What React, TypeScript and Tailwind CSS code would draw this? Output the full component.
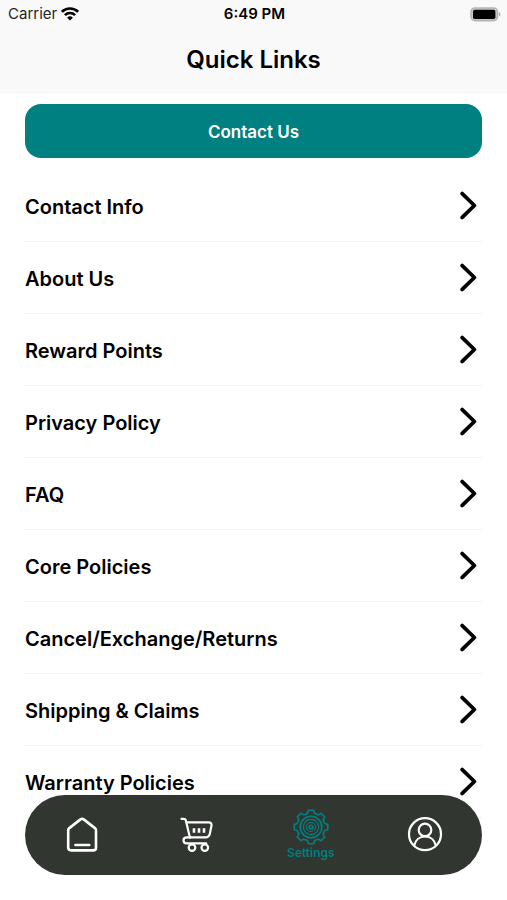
import { ReactNode, useState } from "react";

interface Tab {
  id: string;
  label: string;
  icon: ReactNode;
}

const links = [
  "Contact Info",
  "About Us",
  "Reward Points",
  "Privacy Policy",
  "FAQ",
  "Core Policies",
  "Cancel/Exchange/Returns",
  "Shipping & Claims",
  "Warranty Policies",
];

function WifiIcon() {
  return (
    <svg width="18" height="14" viewBox="0 0 18 14" fill="none" stroke="currentColor" strokeWidth="2.6" aria-hidden="true">
      <path d="M.9 4.8a11.6 11.6 0 0 1 16.2 0" />
      <path d="M3.9 8.1a7.3 7.3 0 0 1 10.2 0" />
      <path d="M9 13.6 6.1 10.7a4.1 4.1 0 0 1 5.8 0Z" fill="currentColor" stroke="none" />
    </svg>
  );
}

function BatteryIcon() {
  return (
    <svg width="31" height="15" viewBox="0 0 31 15" aria-hidden="true">
      <rect x="1" y="1" width="26.5" height="12.6" rx="4" fill="#c9c9c9" stroke="#b5b5b5" strokeWidth="1.6" />
      <rect x="3" y="2.8" width="22.4" height="9.2" rx="1.8" fill="#000" />
      <path d="M28.9 5.2c1 .4 1.6 1.2 1.6 2.1s-.6 1.7-1.6 2.1Z" fill="#adadad" />
    </svg>
  );
}

function ChevronIcon() {
  return (
    <svg width="18" height="30" viewBox="0 0 18 30" fill="none" stroke="#000" strokeWidth="3.8" strokeLinecap="round" strokeLinejoin="round" aria-hidden="true">
      <path d="M2.2 2.6 14.4 14.5 2.2 26.4" />
    </svg>
  );
}

function HomeIcon() {
  return (
    <svg width="36" height="36" viewBox="0 0 36 36" fill="none" stroke="currentColor" strokeWidth="2.6" strokeLinecap="round" strokeLinejoin="round" aria-hidden="true">
      <path d="M4.2 13.400c0-1 .3-1.600 1.100-2.300L16.500 2.400c1.100-.9 2.100-.9 3.200 0l11.200 8.700c.8.700 1.100 1.300 1.100 2.300v17c0 2-.9 3-2.900 3h-22c-2 0-2.900-1-2.900-3Z" />
      <path d="M11.400 28h13.800" />
    </svg>
  );
}

function CartIcon() {
  return (
    <svg width="36" height="36" viewBox="0 0 36 36" fill="none" stroke="currentColor" strokeWidth="2.2" strokeLinecap="round" strokeLinejoin="round" aria-hidden="true">
      <path d="M3.5 1.8h2.3c1 0 1.7.5 2 1.5L12 20.8" />
      <path d="M8.5 5.4h22.3c2 0 3 1.2 2.7 3.1l-1.7 8.4c-.4 2-1.6 3.2-3.7 3.5H9c-2 .1-3.5 1.1-3.5 2.9 0 1.9 1.2 3.1 3.1 3.1h19.6" />
      <path d="M16 11.2v4.6M21 11.2v4.6M26 11.2v4.6" strokeWidth="2.6" strokeLinecap="butt" />
      <circle cx="14" cy="30.6" r="3.3" />
      <circle cx="26.8" cy="30.6" r="3.3" />
    </svg>
  );
}

function GearIcon() {
  return (
    <svg width="36" height="36" viewBox="0 0 36 36" fill="none" stroke="currentColor" strokeWidth="1.6" strokeLinejoin="round" aria-hidden="true">
      <path d="M20.7 1.2A4.2 4.2 0 0 0 28 4.2L31.8 8A4.2 4.2 0 0 0 34.8 15.3V20.7A4.2 4.2 0 0 0 31.8 28L28 31.8A4.2 4.2 0 0 0 20.7 34.8H15.3A4.2 4.2 0 0 0 8 31.8L4.2 28A4.2 4.2 0 0 0 1.2 20.7V15.3A4.2 4.2 0 0 0 4.2 8L8 4.2A4.2 4.2 0 0 0 15.3 1.2Z" />
      <circle cx="18" cy="18" r="10.8" />
      <circle cx="18" cy="18" r="7.6" strokeWidth="1.2" />
      <circle cx="18" cy="18" r="4.5" strokeWidth="1.2" />
      <circle cx="18" cy="18" r="1.8" />
    </svg>
  );
}

function UserIcon() {
  return (
    <svg width="36" height="36" viewBox="0 0 36 36" fill="none" stroke="currentColor" strokeWidth="2.2" aria-hidden="true">
      <circle cx="18" cy="17.2" r="16" />
      <circle cx="18" cy="12.9" r="6.3" />
      <path d="M7.1 28.8c1.2-5.6 5.4-9.3 10.9-9.3s9.7 3.7 10.9 9.3" />
    </svg>
  );
}

const tabs: Tab[] = [
  { id: "home", label: "Home", icon: <HomeIcon /> },
  { id: "cart", label: "Cart", icon: <CartIcon /> },
  { id: "settings", label: "Settings", icon: <GearIcon /> },
  { id: "account", label: "Account", icon: <UserIcon /> },
];

function StatusBar() {
  return (
    <div className="grid h-7 grid-cols-3 items-center pr-1.5 pl-2">
      <div className="flex items-center gap-1 text-[15px] text-neutral-800">
        <span>Carrier</span>
        <span className="text-black">
          <WifiIcon />
        </span>
      </div>
      <span className="text-center text-[15px] font-semibold">6:49 PM</span>
      <div className="flex justify-end">
        <BatteryIcon />
      </div>
    </div>
  );
}

export default function App() {
  const [active, setActive] = useState("settings");

  return (
    <div className="min-h-screen bg-white font-['Inter',sans-serif] text-black">
      <header className="bg-[#f9f9f9]">
        <StatusBar />
        <h1 className="pt-4 pb-[18px] text-center text-2xl font-semibold">Quick Links</h1>
      </header>

      <main className="px-[25px] pt-[10px]">
        <button type="button" className="h-[54px] w-full rounded-2xl bg-[#008080] pt-1 text-[17px] font-semibold text-white">
          Contact Us
        </button>

        <ul className="mt-3">
          {links.map((link) => (
            <li key={link}>
              <a href="#" className="flex h-[72px] items-center justify-between border-b border-[#f4f4f4] pr-1 text-xl font-semibold">
                <span className="pt-0.5">{link}</span>
                <ChevronIcon />
              </a>
            </li>
          ))}
        </ul>
      </main>

      {/* Floating tab bar */}
      <nav className="fixed inset-x-[25px] bottom-[25px] grid h-20 grid-cols-4 rounded-full bg-[#323630]">
        {tabs.map((tab) => {
          const isActive = tab.id === active;
          return (
            <button
              key={tab.id}
              type="button"
              aria-label={tab.label}
              onClick={() => setActive(tab.id)}
              className={`flex flex-col items-center justify-center ${isActive ? "text-[#008080]" : "text-white"}`}
            >
              {tab.icon}
              {isActive && <span className="text-xs font-semibold">{tab.label}</span>}
            </button>
          );
        })}
      </nav>
    </div>
  );
}
